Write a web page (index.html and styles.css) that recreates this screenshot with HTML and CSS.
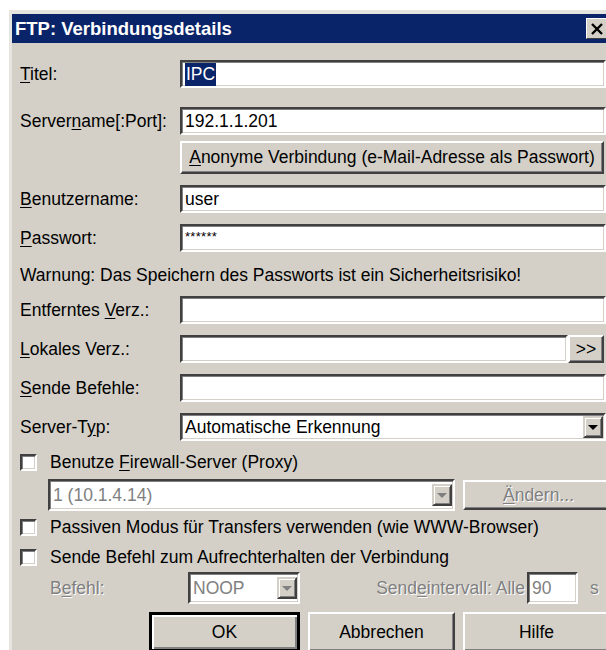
FILE: index.html
```html
<!DOCTYPE html>
<html lang="de">
<head>
<meta charset="utf-8">
<title>FTP: Verbindungsdetails</title>
<link rel="stylesheet" href="styles.css">
</head>
<body>
<div class="window">
  <div class="titlebar">
    <span class="title">FTP: Verbindungsdetails</span>
    <span class="close">
      <svg width="14" height="12" viewBox="0 0 14 12"><path d="M2 1 L12 11 M12 1 L2 11" stroke="#000" stroke-width="2.4" fill="none"/></svg>
    </span>
  </div>
  <div class="form">
    <div class="row r-titel">
      <label class="lbl"><u>T</u>itel:</label>
      <div class="field"><span class="sel">IPC</span></div>
    </div>
    <div class="row r-server">
      <label class="lbl">Server<u>n</u>ame[:Port]:</label>
      <div class="field">192.1.1.201</div>
    </div>
    <div class="row r-anon">
      <span class="lbl"></span>
      <button class="btn btn-anon"><u>A</u>nonyme Verbindung (e-Mail-Adresse als Passwort)</button>
    </div>
    <div class="row r-std">
      <label class="lbl"><u>B</u>enutzername:</label>
      <div class="field">user</div>
    </div>
    <div class="row r-std">
      <label class="lbl"><u>P</u>asswort:</label>
      <div class="field pw">******</div>
    </div>
    <div class="warn">Warnung: Das Speichern des Passworts ist ein Sicherheitsrisiko!</div>
    <div class="row r-remote">
      <label class="lbl">Entferntes <u>V</u>erz.:</label>
      <div class="field"></div>
    </div>
    <div class="row r-std">
      <label class="lbl"><u>L</u>okales Verz.:</label>
      <div class="field"></div>
      <button class="btn btn-browse">&gt;&gt;</button>
    </div>
    <div class="row r-std">
      <label class="lbl"><u>S</u>ende Befehle:</label>
      <div class="field"></div>
    </div>
    <div class="row r-std">
      <label class="lbl">Server-T<u>y</u>p:</label>
      <div class="field combo">
        <span class="combo-text">Automatische Erkennung</span>
        <span class="drop"><i class="tri"></i></span>
      </div>
    </div>
    <div class="check r-fw">
      <span class="box"></span>
      <span>Benutze <u>F</u>irewall-Server (Proxy)</span>
    </div>
    <div class="proxy">
      <div class="field combo proxy-combo disabled">
        <span class="combo-text">1 (10.1.4.14)</span>
        <span class="drop"><i class="tri"></i></span>
      </div>
      <button class="btn btn-change disabled"><u>Ä</u>ndern...</button>
    </div>
    <div class="check r-pasv">
      <span class="box"></span>
      <span>Passiven Modus für Transfers verwenden (wie WWW-Browser)</span>
    </div>
    <div class="check r-keep">
      <span class="box"></span>
      <span>Sende Befehl zum Aufrechterhalten der Verbindung</span>
    </div>
    <div class="keepalive">
      <span class="ka-lbl disabled">B<u>e</u>fehl:</span>
      <div class="field combo noop disabled">
        <span class="combo-text">NOOP</span>
        <span class="drop"><i class="tri"></i></span>
      </div>
      <span class="ka-int disabled">Send<u>e</u>intervall: Alle</span>
      <div class="field secs disabled">90</div>
      <span class="ka-unit disabled">s</span>
    </div>
    <div class="actions">
      <button class="btn btn-act btn-default">OK</button>
      <button class="btn btn-act">Abbrechen</button>
      <button class="btn btn-act">Hilfe</button>
    </div>
  </div>
</div>
</body>
</html>
```

FILE: styles.css
```css
html, body {
  margin: 0;
  padding: 0;
  background: #fff;
  overflow: hidden;
  width: 606px;
  height: 650px;
}

.window {
  margin: 10px 0 0 9px;
  width: 614px;
  background: #d4d0c8;
  border: 3px solid;
  border-top-width: 4px;
  border-color: #e6e4df #404040 #404040 #e6e4df;
  font-family: "Liberation Sans", Arial, sans-serif;
  font-size: 17.5px;
  color: #000;
}

/* caption */
.titlebar {
  height: 29px;
  background: #0a246a;
  display: flex;
  align-items: center;
  justify-content: space-between;
  padding-left: 3px;
}
.title {
  color: #fff;
  font-weight: bold;
  font-size: 18.5px;
}
.close {
  width: 22px;
  height: 21px;
  margin-right: 18px;
  box-sizing: border-box;
  background: #d4d0c8;
  border: 1px solid;
  border-color: #fff #404040 #404040 #fff;
  display: flex;
  align-items: center;
  justify-content: center;
}

.form {
  padding: 17px 20px 0 8px;
  display: flex;
  flex-direction: column;
}

.row {
  display: flex;
  align-items: center;
  height: 28px;
}
.lbl {
  width: 160px;
  flex: none;
}
u { text-decoration: underline; text-underline-offset: 2px; }

.r-titel { margin-top: 0; }
.r-server { margin-top: 19px; }
.r-anon { margin-top: 6px; height: 33px; }
.r-std { margin-top: 11px; }
.r-remote { margin-top: 8px; }

/* sunken edit box */
.field {
  flex: 1;
  height: 100%;
  box-sizing: border-box;
  background: #fff;
  border: 2px solid;
  border-color: #404040 #fff #fff #404040;
  box-shadow: inset 1px 1px #808080, inset -1px -1px #d4d0c8;
  padding: 0 3px;
  display: flex;
  align-items: center;
  white-space: nowrap;
  overflow: hidden;
}
.sel {
  background: #0a246a;
  color: #fff;
  padding: 1px 1px;
}
.pw {
  align-items: flex-start;
  font-size: 13px;
  padding-top: 3px;
  letter-spacing: 0.3px;
}

/* raised push button */
.btn {
  font: inherit;
  color: #000;
  background: #d4d0c8;
  box-sizing: border-box;
  border: 2px solid;
  border-color: #fff #404040 #404040 #fff;
  box-shadow: inset -1px -1px #808080;
  padding: 0;
  margin: 0;
}
.btn-anon {
  flex: 1;
  height: 100%;
  margin-right: 2px;
}
.btn-browse {
  width: 36px;
  height: 100%;
  margin-right: 2px;
  flex: none;
}

.warn {
  margin-top: 10px;
  height: 26px;
  line-height: 26px;
}

/* combo box */
.combo {
  padding-right: 1px;
  justify-content: space-between;
}
.drop {
  width: 20px;
  height: 22px;
  box-sizing: border-box;
  background: #d4d0c8;
  border: 2px solid;
  border-color: #d4d0c8 #404040 #404040 #d4d0c8;
  box-shadow: inset 1px 1px #fff, inset -1px -1px #808080;
  display: flex;
  align-items: center;
  justify-content: center;
  flex: none;
}
.tri {
  width: 0;
  height: 0;
  border-left: 5px solid transparent;
  border-right: 5px solid transparent;
  border-top: 5px solid #000;
}

/* check boxes */
.check {
  display: flex;
  align-items: center;
  height: 22px;
}
.box {
  width: 17px;
  height: 17px;
  box-sizing: border-box;
  background: #fff;
  border: 2px solid;
  border-color: #404040 #fff #fff #404040;
  box-shadow: inset 1px 1px #808080, inset -1px -1px #d4d0c8;
  margin-right: 13px;
  flex: none;
}
.r-fw { margin-top: 10px; }
.r-pasv { margin-top: 5px; }
.r-keep { margin-top: 8px; }

.proxy {
  display: flex;
  height: 32px;
  margin-top: 6px;
  padding-left: 28px;
  align-items: center;
}
.proxy-combo {
  flex: none;
  width: 407px;
}
.btn-change {
  flex: 1;
  margin-left: 8px;
  margin-right: -8px;
  height: 30px;
}

.disabled {
  color: #808080;
  text-shadow: 1px 1px #fff;
}
.field.disabled { text-shadow: none; }
.disabled .tri { border-top-color: #808080; }

.keepalive {
  display: flex;
  align-items: center;
  height: 32px;
  margin-top: 4px;
  padding-left: 30px;
}
.ka-lbl {
  width: 138px;
  flex: none;
}
.noop {
  flex: none;
  width: 112px;
}
.ka-int {
  width: 227px;
  text-align: right;
  flex: none;
  padding-right: 2px;
  box-sizing: border-box;
}
.secs {
  flex: none;
  width: 51px;
}
.ka-unit {
  margin-left: 12px;
}

.actions {
  display: flex;
  gap: 8px;
  margin-top: 8px;
  padding-left: 129px;
  height: 40px;
}
.btn-act {
  width: 147px;
  height: 40px;
  flex: none;
}
.btn-default {
  width: 151px;
  border: 3px solid #000;
  box-shadow: inset 2px 2px #fff, inset -2px -2px #808080;
}
```
